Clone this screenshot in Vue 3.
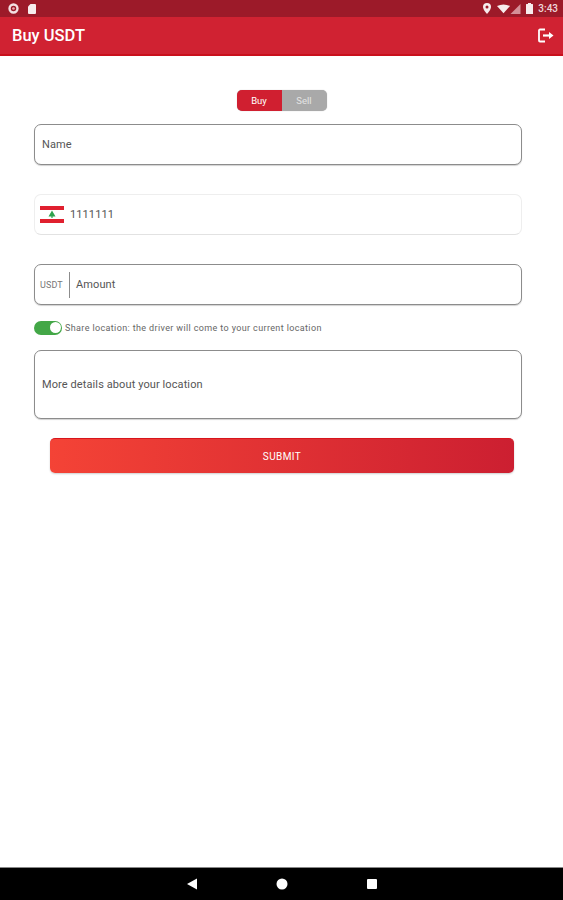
<template>
  <div class="pantalla">
    <div class="status-bar">
      <div class="status-grupo">
        <svg class="ic-aviso" width="11" height="11" viewBox="0 0 10 10">
          <circle cx="5" cy="5" r="3.600" fill="none" stroke="#f3dfe2" stroke-width="2.200" />
          <circle cx="5" cy="5" r="1.200" fill="#e9a9b1" />
        </svg>
        <svg class="ic-sd" width="8" height="10" viewBox="0 0 8 10">
          <path d="M2.500 0H7a1 1 0 0 1 1 1v8a1 1 0 0 1-1 1H1a1 1 0 0 1-1-1V2.500z" fill="#f7eced" />
        </svg>
      </div>
      <div class="status-grupo derecha">
        <svg width="8" height="11" viewBox="0 0 8 11">
          <path d="M4 0a4 4 0 0 1 4 4c0 2.800-4 7-4 7S0 6.800 0 4a4 4 0 0 1 4-4z" fill="#f7eced" />
          <circle cx="4" cy="4" r="1.500" fill="#9c1a29" />
        </svg>
        <svg class="ic-wifi" width="13" height="10" viewBox="0 0 15 10">
          <path d="M0 1.500Q7.500-2 15 1.500L7.500 10z" fill="#f7eced" />
        </svg>
        <svg class="ic-senal" width="11" height="10" viewBox="0 0 10 10">
          <path d="M10 0V10H0z" fill="#d58f98" />
        </svg>
        <svg class="ic-bateria" width="7" height="11" viewBox="0 0 7 11">
          <path d="M2 0h3v1h1.500a.5.5 0 0 1 .5.5V11H0V1.500A.5.5 0 0 1 .5 1H2z" fill="#f7eced" />
        </svg>
        <span class="hora">3:43</span>
      </div>
    </div>

    <header class="app-bar">
      <span class="titulo">Buy USDT</span>
      <svg width="16" height="15" viewBox="0 0 16 15" fill="none" stroke="#fff" stroke-width="1.800">
        <path d="M7 1.500H2a1 1 0 0 0-1 1v10a1 1 0 0 0 1 1h5" />
        <path d="M5 7.500h6.500" stroke-width="2.200" />
        <path d="M11 4l4.500 3.500L11 11z" fill="#fff" stroke="none" />
      </svg>
    </header>

    <main class="contenido">
      <div class="selector">
        <span class="opcion activa">Buy</span>
        <span class="opcion">Sell</span>
      </div>

      <div class="campo campo-nombre">
        <span>Name</span>
      </div>

      <div class="campo campo-telefono">
        <svg class="bandera" width="24" height="17" viewBox="0 0 24 17">
          <rect width="24" height="17" fill="#fff" />
          <rect width="24" height="4" fill="#e0202f" />
          <rect y="13" width="24" height="4" fill="#e0202f" />
          <path d="M12 4.500l3.500 6h-2.900v1.500h-1.200v-1.500H8.500z" fill="#2fa34f" />
        </svg>
        <span>1111111</span>
      </div>

      <div class="campo campo-monto">
        <span class="moneda">USDT</span>
        <span class="separador"></span>
        <span>Amount</span>
      </div>

      <div class="fila-ubicacion">
        <span class="interruptor"><span class="perilla"></span></span>
        <span class="texto-ubicacion">Share location: the driver will come to your current location</span>
      </div>

      <div class="campo campo-detalles">
        <span>More details about your location</span>
      </div>

      <button type="button" class="btn-enviar">SUBMIT</button>
    </main>

    <nav class="nav-bar">
      <svg width="12" height="12" viewBox="0 0 12 12"><path d="M11 0.500V11.500L1 6z" fill="#fff" /></svg>
      <svg width="12" height="12" viewBox="0 0 12 12"><circle cx="6" cy="6" r="5.500" fill="#fff" /></svg>
      <svg width="12" height="12" viewBox="0 0 12 12"><rect x="1" y="1" width="10" height="10" rx="1" fill="#fff" /></svg>
    </nav>
  </div>
</template>

<script setup>
</script>

<style>
html,
body {
  margin: 0;
  background: #fff;
}
</style>

<style scoped>
.pantalla {
  display: flex;
  flex-direction: column;
  height: 900px;
  font-family: Roboto, "Liberation Sans", sans-serif;
  color: #555;
  overflow: hidden;
}

.status-bar {
  display: flex;
  justify-content: space-between;
  align-items: center;
  height: 17px;
  padding: 0 5px 0 8px;
  background: #9c1a29;
  flex-shrink: 0;
}
.status-grupo {
  display: flex;
  align-items: center;
  gap: 9px;
}
.status-grupo.derecha {
  gap: 0;
}
.ic-wifi {
  margin-left: 6px;
}
.ic-bateria {
  margin-left: 5px;
}
.hora {
  margin-left: 5px;
  color: #eed6d9;
  font-size: 10px;
  font-weight: 500;
}

.app-bar {
  display: flex;
  justify-content: space-between;
  align-items: center;
  box-sizing: border-box;
  height: 39px;
  padding: 0 9px 0 12px;
  background: #d02232;
  border-bottom: 2px solid #c9101c;
  flex-shrink: 0;
}
.titulo {
  color: #fff;
  font-size: 16.500px;
  font-weight: 500;
}

.contenido {
  flex: 1;
  display: flex;
  flex-direction: column;
  padding: 34px 41px 0 34px;
  background: #fff;
}

.selector {
  display: flex;
  align-self: center;
  width: 90px;
  height: 21px;
  margin-left: 7px;
  border-radius: 5px;
  overflow: hidden;
  background: #a9a9a9;
  font-size: 9.500px;
  box-shadow: 0 0 1px rgba(0, 0, 0, 0.3);
}
.opcion {
  flex: 1;
  display: flex;
  align-items: center;
  justify-content: center;
  color: #e4e4e4;
}
.opcion.activa {
  background: #d01f30;
  color: #fff;
}

.campo {
  display: flex;
  align-items: center;
  box-sizing: border-box;
  height: 41px;
  padding: 0 7px;
  border: 1px solid #8c8c8c;
  border-radius: 7px;
  background: #fff;
  font-size: 11px;
  letter-spacing: 0.1px;
  box-shadow: 0 1px 1px rgba(0, 0, 0, 0.18);
}
.campo-nombre {
  margin-top: 13px;
}
.campo-telefono {
  margin-top: 29px;
  padding-left: 5px;
  gap: 6px;
  border: 1px solid #eeeeee;
  border-bottom: 1px solid #e2e2e2;
  box-shadow: none;
}
.campo-monto {
  margin-top: 29px;
  padding-left: 5px;
}
.moneda {
  font-size: 9px;
  letter-spacing: 0.1px;
  color: #777;
  width: 24px;
}
.separador {
  width: 1px;
  height: 26px;
  margin: 0 6px 0 5px;
  background: #8c8c8c;
}
.fila-ubicacion {
  display: flex;
  align-items: center;
  gap: 3px;
  height: 15px;
  margin-top: 15px;
}
.interruptor {
  display: flex;
  align-items: center;
  justify-content: flex-end;
  box-sizing: border-box;
  width: 28px;
  height: 14px;
  padding-right: 1px;
  border-radius: 7px;
  background: #43a747;
}
.perilla {
  width: 11px;
  height: 11px;
  border-radius: 50%;
  background: #fff;
}
.texto-ubicacion {
  font-size: 9px;
  color: #666;
  letter-spacing: 0.37px;
}
.campo-detalles {
  height: 69px;
  margin-top: 15px;
}
.btn-enviar {
  display: block;
  width: 464px;
  height: 35px;
  margin: 19px 0 0 16px;
  padding: 0;
  border: none;
  border-top: 1px solid #d8141c;
  border-radius: 5px;
  background: linear-gradient(90deg, #f44336, #cc1f31);
  color: #fff;
  font-family: inherit;
  font-size: 10px;
  letter-spacing: 0.4px;
  box-shadow: 0 1px 2px rgba(0, 0, 0, 0.2);
}

.nav-bar {
  display: flex;
  justify-content: center;
  align-items: center;
  gap: 78px;
  height: 33px;
  background: #000;
  flex-shrink: 0;
  border-top: 1px solid #888;
  box-sizing: border-box;
}
</style>
